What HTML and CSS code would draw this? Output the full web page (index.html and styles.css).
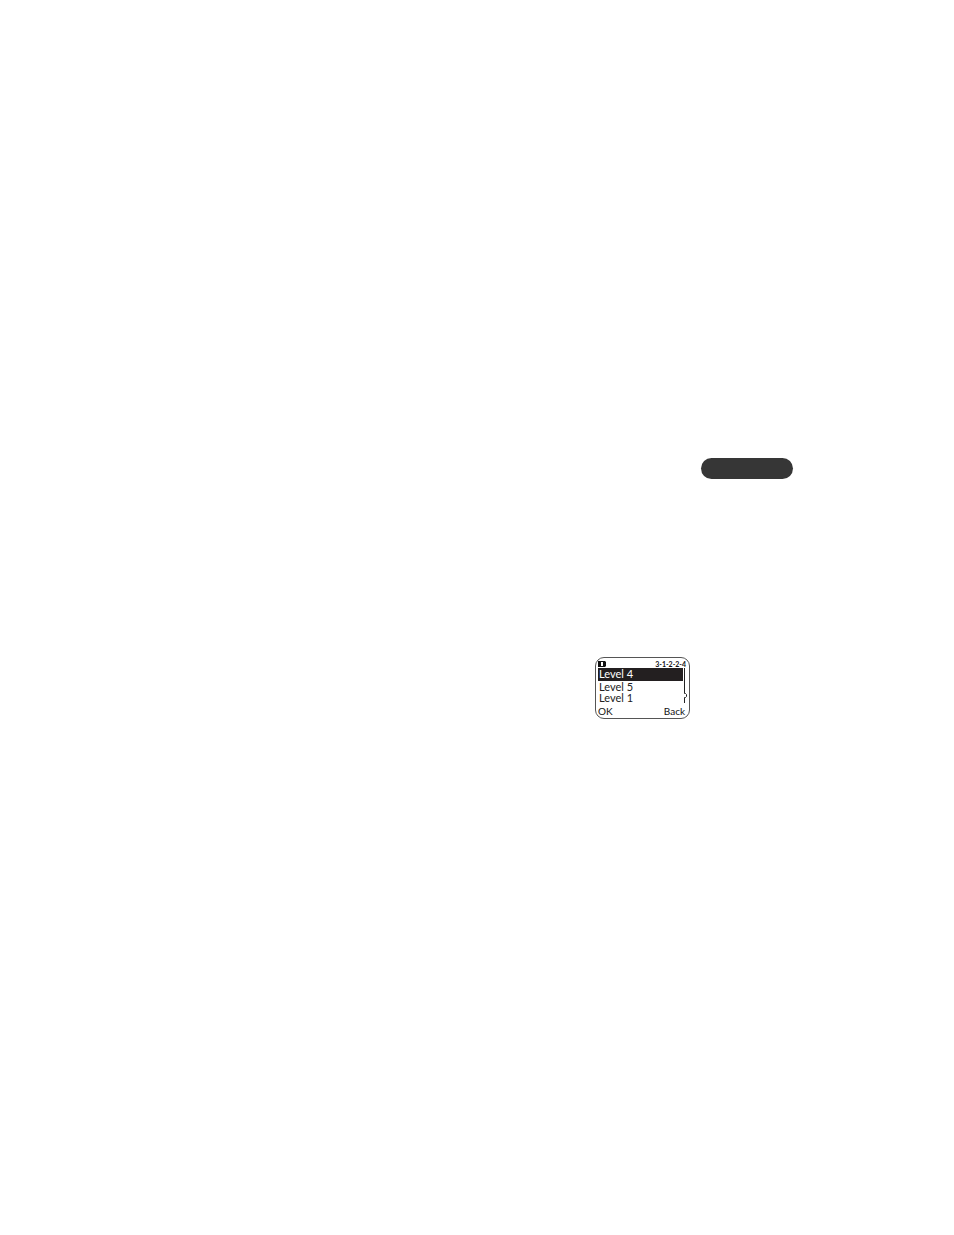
FILE: index.html
```html
<!DOCTYPE html>
<html lang="en">
    <head>
        <meta charset="UTF-8" />
        <title>Level</title>
        <link rel="stylesheet" href="styles.css">
    </head>
    <body>
        <main class="page">
            <div class="tab"></div>

            <!-- Handset display -->
            <section class="screen">
                <header class="status">
                    <svg class="battery" width="8" height="6" viewBox="0 0 8 6">
                        <path fill="#111" fill-rule="evenodd" d="M0 0h7l1 1v4l-1 1H0zM3 1v4h2V1z" />
                    </svg>
                    <span class="code">3-1-2-2-4</span>
                </header>
                <div class="menu">
                    <ul class="levels">
                        <li class="selected">Level 4</li>
                        <li>Level 5</li>
                        <li>Level 1</li>
                    </ul>
                    <svg class="scroll" width="4" height="35" viewBox="0 0 4 35">
                        <path fill="none" stroke="#222" d="M1.5 0v25.5h1l1 1v2l-1 1h-1V35" />
                    </svg>
                </div>
                <footer class="softkeys">
                    <button type="button">OK</button>
                    <button type="button">Back</button>
                </footer>
            </section>
        </main>
    </body>
</html>
```

FILE: styles.css
```css
body {
    margin: 0;
    background: #fff;
    color: #222;
    font-family: Lato, "Liberation Sans", sans-serif;
}
.page {
    display: flex;
    flex-direction: column;
    align-items: flex-end;
    padding: 458px 161px 40px;
}
.tab {
    width: 92px;
    height: 21px;
    border-radius: 11px;
    background: #363636;
}
.screen {
    box-sizing: border-box;
    width: 95px;
    margin: 178px 103px 0 0;
    padding: 2px 2px 1px;
    border: 1px solid #555;
    border-radius: 9px;
    font-size: 11px;
    line-height: 11px;
}
.status {
    display: flex;
    justify-content: space-between;
    align-items: center;
    height: 8px;
}
.code {
    padding-right: 1px;
    color: #111;
    font-size: 7px;
    font-weight: 700;
    line-height: 7px;
}
.menu {
    display: flex;
}
.levels {
    flex: 1;
    margin: 0;
    padding: 0;
    list-style: none;
}
.levels li {
    padding-left: 1px;
}
.levels .selected {
    padding-bottom: 1px;
    background: #231f20;
    color: #fff;
    line-height: 12px;
}
.softkeys {
    display: flex;
    justify-content: space-between;
    margin-top: 2px;
    padding-right: 2px;
}
.softkeys button {
    padding: 0;
    border: none;
    background: none;
    color: #111;
    font: inherit;
    font-size: 10px;
    line-height: 12px;
    cursor: pointer;
}
```
